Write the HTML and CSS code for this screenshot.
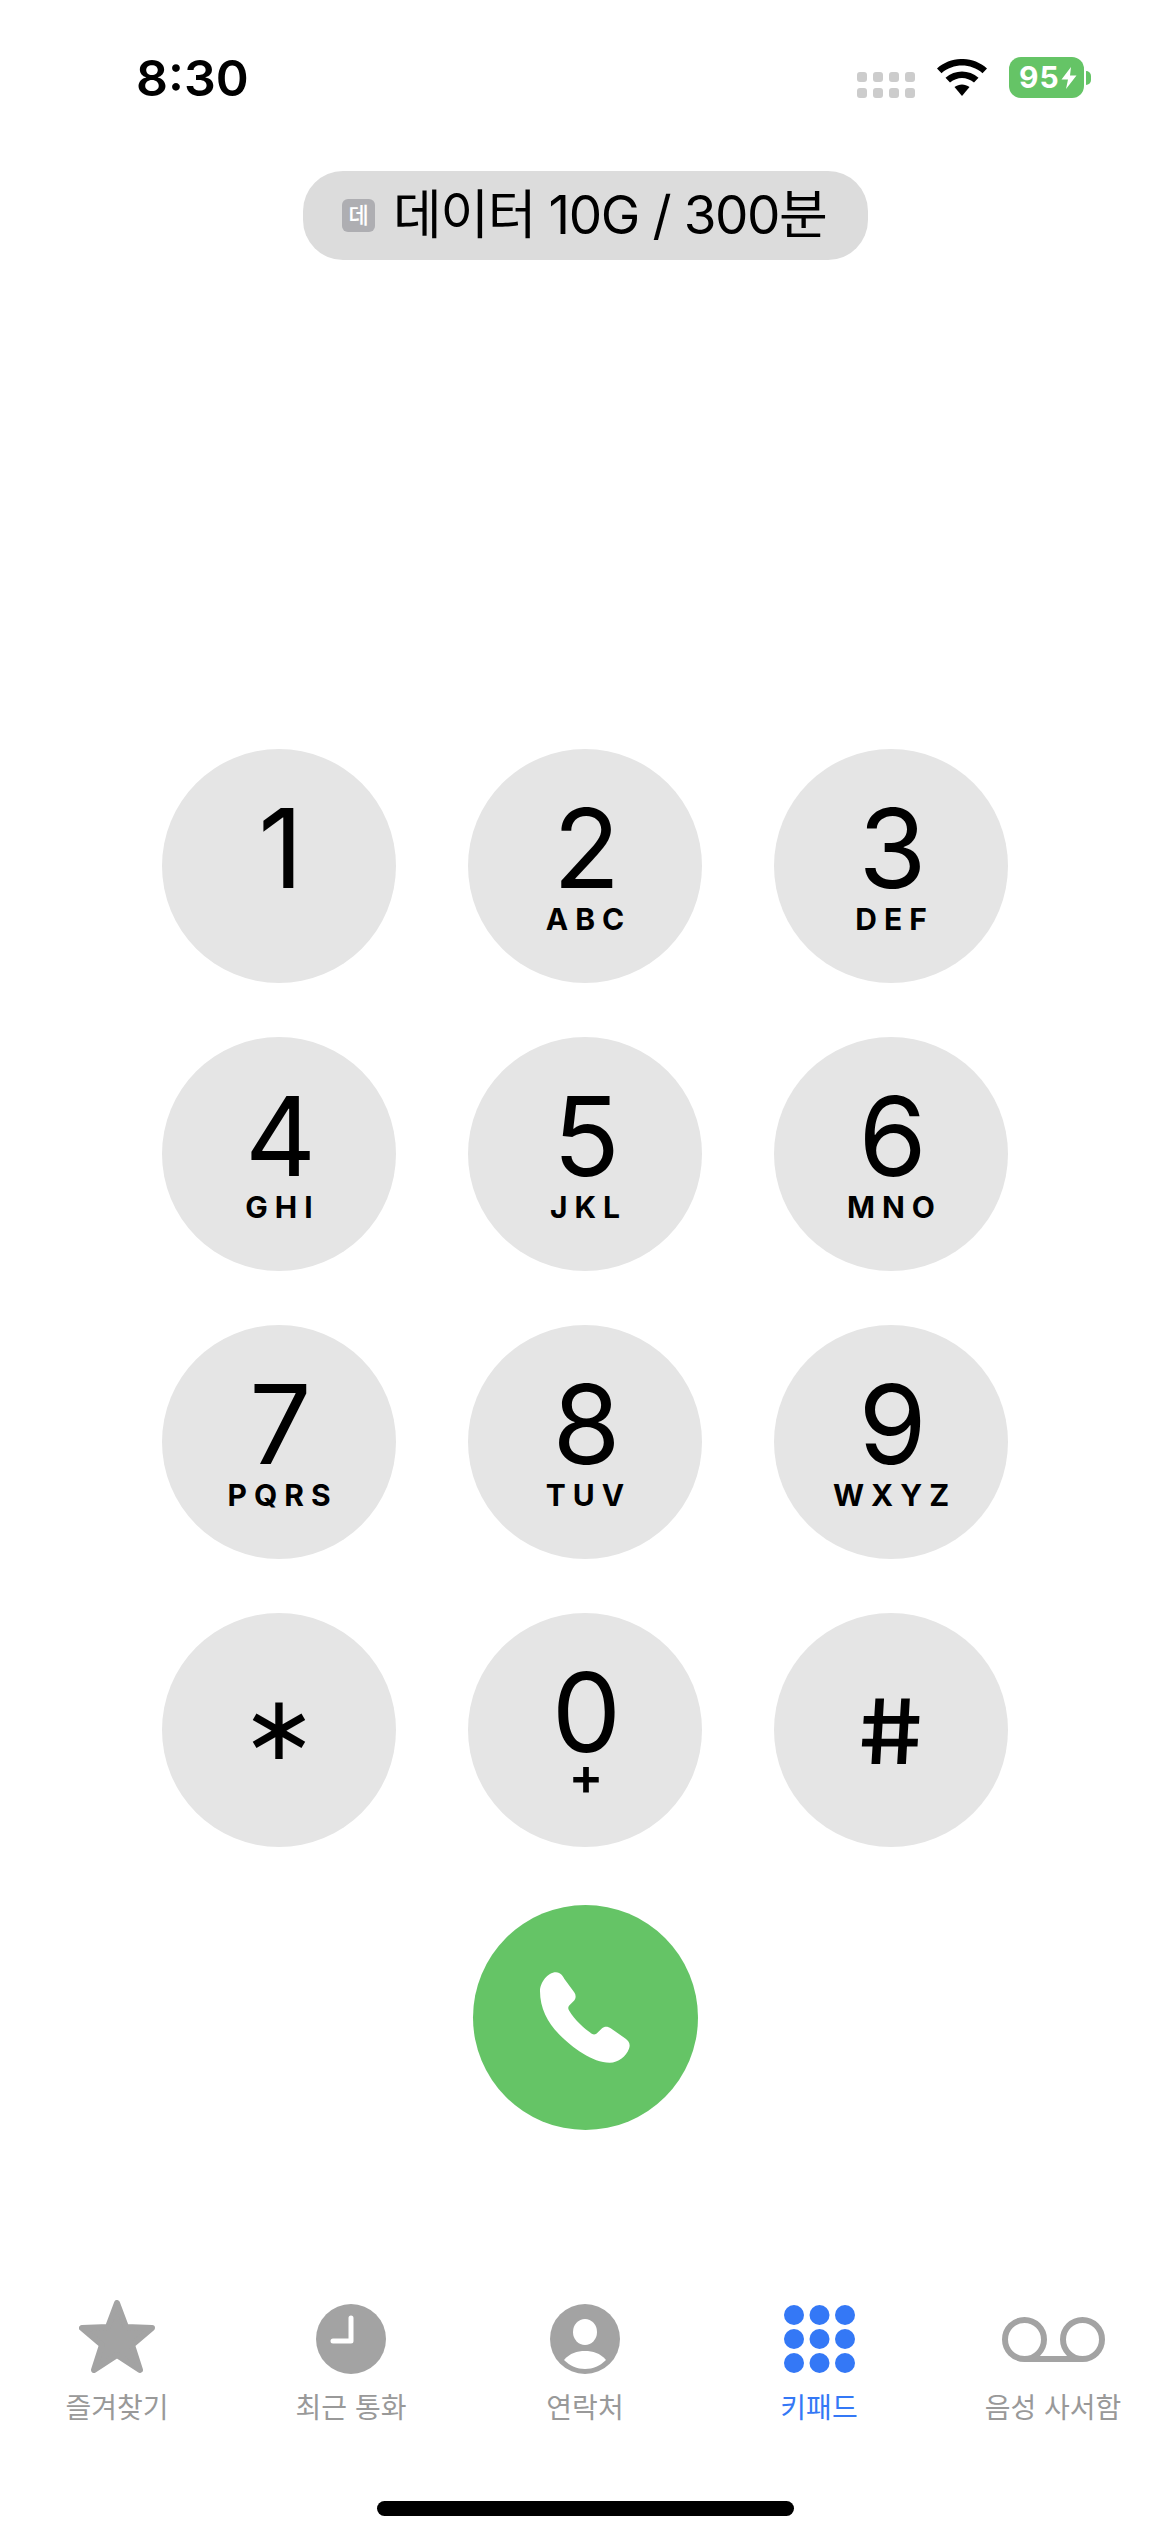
FILE: index.html
```html
<!DOCTYPE html>
<html lang="ko">
<head>
<meta charset="utf-8">
<title>키패드</title>
<link rel="stylesheet" href="styles.css">
</head>
<body>
<main class="phone">
  <header class="status">
    <span class="time">8:30</span>
    <div class="status-right">
      <div class="signal"><i></i><i></i><i></i><i></i><i></i><i></i><i></i><i></i></div>
      <svg class="wifi" viewBox="0 0 50 37"><path d="M0 9.5C14-3.2 36-3.2 50 9.5L45.5 14.2C33.5 4 16.5 4 4.5 14.2Z"/><path d="M8.5 18.8C18 10.5 32 10.5 41.5 18.8L37 23.5C29.5 17.5 20.5 17.5 13 23.5Z"/><path d="M17.5 28C22 24.5 28 24.5 32.5 28L25 37Z"/></svg>
      <div class="battery">
        <div class="battery-body"><span>95</span><svg class="bolt" viewBox="0 0 16 22"><path d="M10 0 0.5 12.5H7L5 22 15.5 8.5H9Z"/></svg></div>
        <div class="battery-nub"></div>
      </div>
    </div>
  </header>

  <div class="pill-row">
    <div class="pill"><span class="badge">데</span><span class="pill-text">데이터 10G / 300분</span></div>
  </div>

  <section class="keypad">
    <button class="key"><span class="digit">1</span></button>
    <button class="key"><span class="digit">2</span><span class="letters">ABC</span></button>
    <button class="key"><span class="digit">3</span><span class="letters">DEF</span></button>
    <button class="key"><span class="digit">4</span><span class="letters">GHI</span></button>
    <button class="key"><span class="digit">5</span><span class="letters">JKL</span></button>
    <button class="key"><span class="digit">6</span><span class="letters">MNO</span></button>
    <button class="key"><span class="digit">7</span><span class="letters">PQRS</span></button>
    <button class="key"><span class="digit">8</span><span class="letters">TUV</span></button>
    <button class="key"><span class="digit">9</span><span class="letters">WXYZ</span></button>
    <button class="key"><span class="symbol star-key">∗</span></button>
    <button class="key"><span class="digit">0</span><span class="plus">+</span></button>
    <button class="key"><span class="symbol hash-key">#</span></button>
  </section>

  <div class="call-row">
    <button class="call">
      <svg class="phone-icon" viewBox="272 278 271 272"><path d="M320 278C335 278 340 290 345 297L375 338C382 348 380 358 372 366L360 378C356 383 356 388 360 394C375 420 405 448 428 463C435 467 440 465 445 460L458 447C466 440 476 440 486 447L530 478C540 486 545 495 540 508C532 530 508 550 482 550C430 550 370 505 330 465C295 430 272 385 272 335C272 310 295 278 320 278Z"/></svg>
    </button>
  </div>

  <nav class="tabs">
    <div class="tab">
      <div class="tab-icon"><svg class="i-star" viewBox="0 0 76 73"><path d="M38 3 47 27 73 28 53 45 61 70 38 55 15 70 23 45 3 28 29 27Z"/></svg></div>
      <span class="tab-label">즐겨찾기</span>
    </div>
    <div class="tab">
      <div class="tab-icon"><svg class="i-round" viewBox="0 0 70 70"><circle cx="35" cy="35" r="35"/><path class="hand" d="M35 14V37H17"/></svg></div>
      <span class="tab-label">최근 통화</span>
    </div>
    <div class="tab">
      <div class="tab-icon"><svg class="i-round" viewBox="0 0 70 70"><circle cx="35" cy="35" r="35"/><ellipse class="cut" cx="35" cy="28" rx="12" ry="13"/><path class="cut" d="M14 56C20 49 27 47 35 47C43 47 50 49 56 56C50 62 43 65 35 65C27 65 20 62 14 56Z"/></svg></div>
      <span class="tab-label">연락처</span>
    </div>
    <div class="tab active">
      <div class="tab-icon"><svg class="i-grid" viewBox="0 0 71 68"><circle cx="10" cy="10" r="10"/><circle cx="35.500" cy="10" r="10"/><circle cx="61" cy="10" r="10"/><circle cx="10" cy="34" r="10"/><circle cx="35.500" cy="34" r="10"/><circle cx="61" cy="34" r="10"/><circle cx="10" cy="58" r="10"/><circle cx="35.500" cy="58" r="10"/><circle cx="61" cy="58" r="10"/></svg></div>
      <span class="tab-label">키패드</span>
    </div>
    <div class="tab">
      <div class="tab-icon"><svg class="i-vm" viewBox="0 0 103 45"><circle cx="22.500" cy="22.500" r="19.500"/><circle cx="80.500" cy="22.500" r="19.500"/><path d="M22.500 42H80.500"/></svg></div>
      <span class="tab-label">음성 사서함</span>
    </div>
  </nav>

  <div class="home-row"><div class="home-bar"></div></div>
</main>
</body>
</html>
```

FILE: styles.css
```css
* { box-sizing: border-box; }
html, body { margin: 0; padding: 0; background: #fff; }
body { font-family: Inter, "Noto Sans CJK KR", sans-serif; color: #000; }
.phone { width: 1170px; height: 2532px; overflow: hidden; display: flex; flex-direction: column; }

.status { height: 171px; display: flex; justify-content: space-between; align-items: flex-start; padding: 0 79px 0 136px; }
.time { font-size: 50px; font-weight: 600; line-height: 62px; margin-top: 47px; }
.status-right { display: flex; align-items: flex-start; margin-top: 57px; }
.signal { display: grid; grid-template-columns: repeat(4, 10px); grid-auto-rows: 10px; gap: 6px; margin-top: 15px; }
.signal i { background: #ccc; border-radius: 3px; }
.wifi { width: 50px; height: 37px; margin: 2px 22px 0 22px; fill: #000; }
.battery { display: flex; align-items: center; }
.battery-body { width: 75px; height: 41px; background: #65c466; border-radius: 12px; color: #fff; display: flex; align-items: center; padding-left: 10px; }
.battery-body span { font-size: 30px; font-weight: 700; letter-spacing: 1px; line-height: 41px; }
.bolt { width: 16px; height: 22px; fill: #fff; margin-left: 1px; }
.battery-nub { width: 5px; height: 14px; background: #65c466; border-radius: 0 7px 7px 0; margin-left: 2px; }

.pill-row { display: flex; padding-left: 303px; }
.pill { width: 565px; height: 89px; border-radius: 40px; background: #dcdcdc; display: flex; align-items: center; padding-left: 39px; }
.badge { width: 33px; height: 33px; border-radius: 6px; background: #aeaeb2; color: #fff; font-size: 22px; line-height: 33px; text-align: center; font-weight: 500; }
.pill-text { font-size: 53px; line-height: 89px; margin-left: 18px; letter-spacing: -1.4px; white-space: nowrap; }

.keypad { display: grid; grid-template-columns: repeat(3, 234px); grid-auto-rows: 234px; gap: 54px 72px; justify-content: center; margin-top: 489px; }
.key { width: 234px; height: 234px; border: 0; border-radius: 50%; background: #e5e5e5; padding: 49px 0 0; display: flex; flex-direction: column; align-items: center; justify-content: flex-start; font-family: inherit; color: #000; }
.digit { font-size: 110px; line-height: 100px; font-weight: 400; padding-left: 3px; }
.letters { font-size: 30px; line-height: 30px; font-weight: 700; letter-spacing: 7px; padding-left: 7px; margin-top: 6px; }
.plus { font-size: 52px; line-height: 44px; font-weight: 600; margin-top: -7px; padding-left: 2px; }
.symbol { line-height: 100px; display: block; }
.star-key { font-family: "DejaVu Sans", sans-serif; font-size: 90px; margin-top: 16px; }
.hash-key { font-size: 90px; font-weight: 500; margin-top: 20px; transform: skewX(7deg) scaleX(1.12); }

.call-row { display: flex; justify-content: center; margin-top: 58px; }
.call { width: 225px; height: 225px; border: 0; border-radius: 50%; background: #65c466; padding: 0; display: flex; align-items: center; justify-content: center; }
.phone-icon { width: 90px; height: 91px; fill: #fff; }

.tabs { display: grid; grid-template-columns: repeat(5, 234px); margin-top: 170px; }
.tab { display: flex; flex-direction: column; align-items: center; color: #999; }
.tab.active { color: #3478f6; }
.tab-icon { height: 78px; display: flex; align-items: center; justify-content: center; }
.i-star { width: 76px; height: 73px; align-self: flex-start; fill: #a3a3a3; stroke: #a3a3a3; stroke-width: 6; stroke-linejoin: round; }
.i-round { width: 70px; height: 70px; fill: #a3a3a3; }
.hand { fill: none; stroke: #fff; stroke-width: 5; stroke-linecap: round; stroke-linejoin: round; }
.cut { fill: #fff; }
.i-grid { width: 71px; height: 68px; fill: #3478f6; }
.i-vm { width: 103px; height: 45px; fill: none; stroke: #a3a3a3; stroke-width: 6; }
.tab-label { font-family: "Noto Sans CJK KR", sans-serif; font-size: 28px; line-height: 40px; margin-top: 8px; white-space: nowrap; }

.home-row { display: flex; justify-content: center; margin-top: 75px; }
.home-bar { width: 417px; height: 15px; border-radius: 8px; background: #000; }
```
